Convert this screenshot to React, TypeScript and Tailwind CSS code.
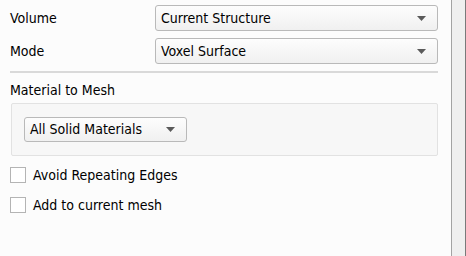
import React from "react";

function Caret() {
  return (
    <svg width="9" height="5" viewBox="0 0 9 5" className="shrink-0">
      <path d="M0 0 L9 0 L4.5 5 Z" fill="#5a5a5a" />
    </svg>
  );
}

function Combo({ label, className }: { label: string; className: string }) {
  return (
    <div
      className={
        "flex items-center justify-between rounded-[3px] border border-[#b9b9b9] bg-gradient-to-b from-[#fdfdfd] to-[#f0f0f0] pl-[5px] pr-[11px] text-[14px] leading-[19px] text-black" +
        " " +
        className
      }
    >
      <span>{label}</span>
      <Caret />
    </div>
  );
}

function Check({ label }: { label: string }) {
  return (
    <div className="flex h-[16px] items-center gap-[7px]">
      <div className="h-[16px] w-[16px] border border-[#b4b4b4] bg-white" />
      <span className="text-[14px] leading-[16px] text-black">{label}</span>
    </div>
  );
}

export default function App() {
  const [volume] = React.useState("Current Structure");
  const [mode] = React.useState("Voxel Surface");

  return (
    <div
      className="flex h-[256px] w-[466px] overflow-hidden bg-[#fcfcfc]"
      style={{ fontFamily: "Tahoma, 'DejaVu Sans Condensed', 'Liberation Sans', sans-serif" }}
    >
      <div className="flex w-[451px] flex-col pl-[10px] pr-[13px] pt-[5px]">
        <div className="flex items-center">
          <span className="w-[145px] text-[14px] text-black">Volume</span>
          <Combo label={volume} className="h-[26px] flex-1" />
        </div>
        <div className="mt-[7px] flex items-center">
          <span className="w-[145px] text-[14px] text-black">Mode</span>
          <Combo label={mode} className="h-[26px] flex-1" />
        </div>
        <div className="mt-[7px] h-[2px] bg-[#d9d9d9]" />
        <div className="mt-[8px] text-[14px] leading-[19px] text-black">Material to Mesh</div>
        <div className="ml-[1px] mt-[3px] flex h-[53px] items-center rounded-[2px] border border-[#e2e2e2] bg-[#f7f7f7] pl-[12px]">
          <Combo label="All Solid Materials" className="h-[25px] w-[163px]" />
        </div>
        <div className="mt-[11px] flex flex-col gap-[14px]">
          <Check label="Avoid Repeating Edges" />
          <Check label="Add to current mesh" />
        </div>
      </div>
      <div className="w-px bg-[#a3a3a3]" />
      <div className="flex-1 bg-[#efefef]" />
      <div className="w-px bg-[#7a7a7a]" />
    </div>
  );
}
